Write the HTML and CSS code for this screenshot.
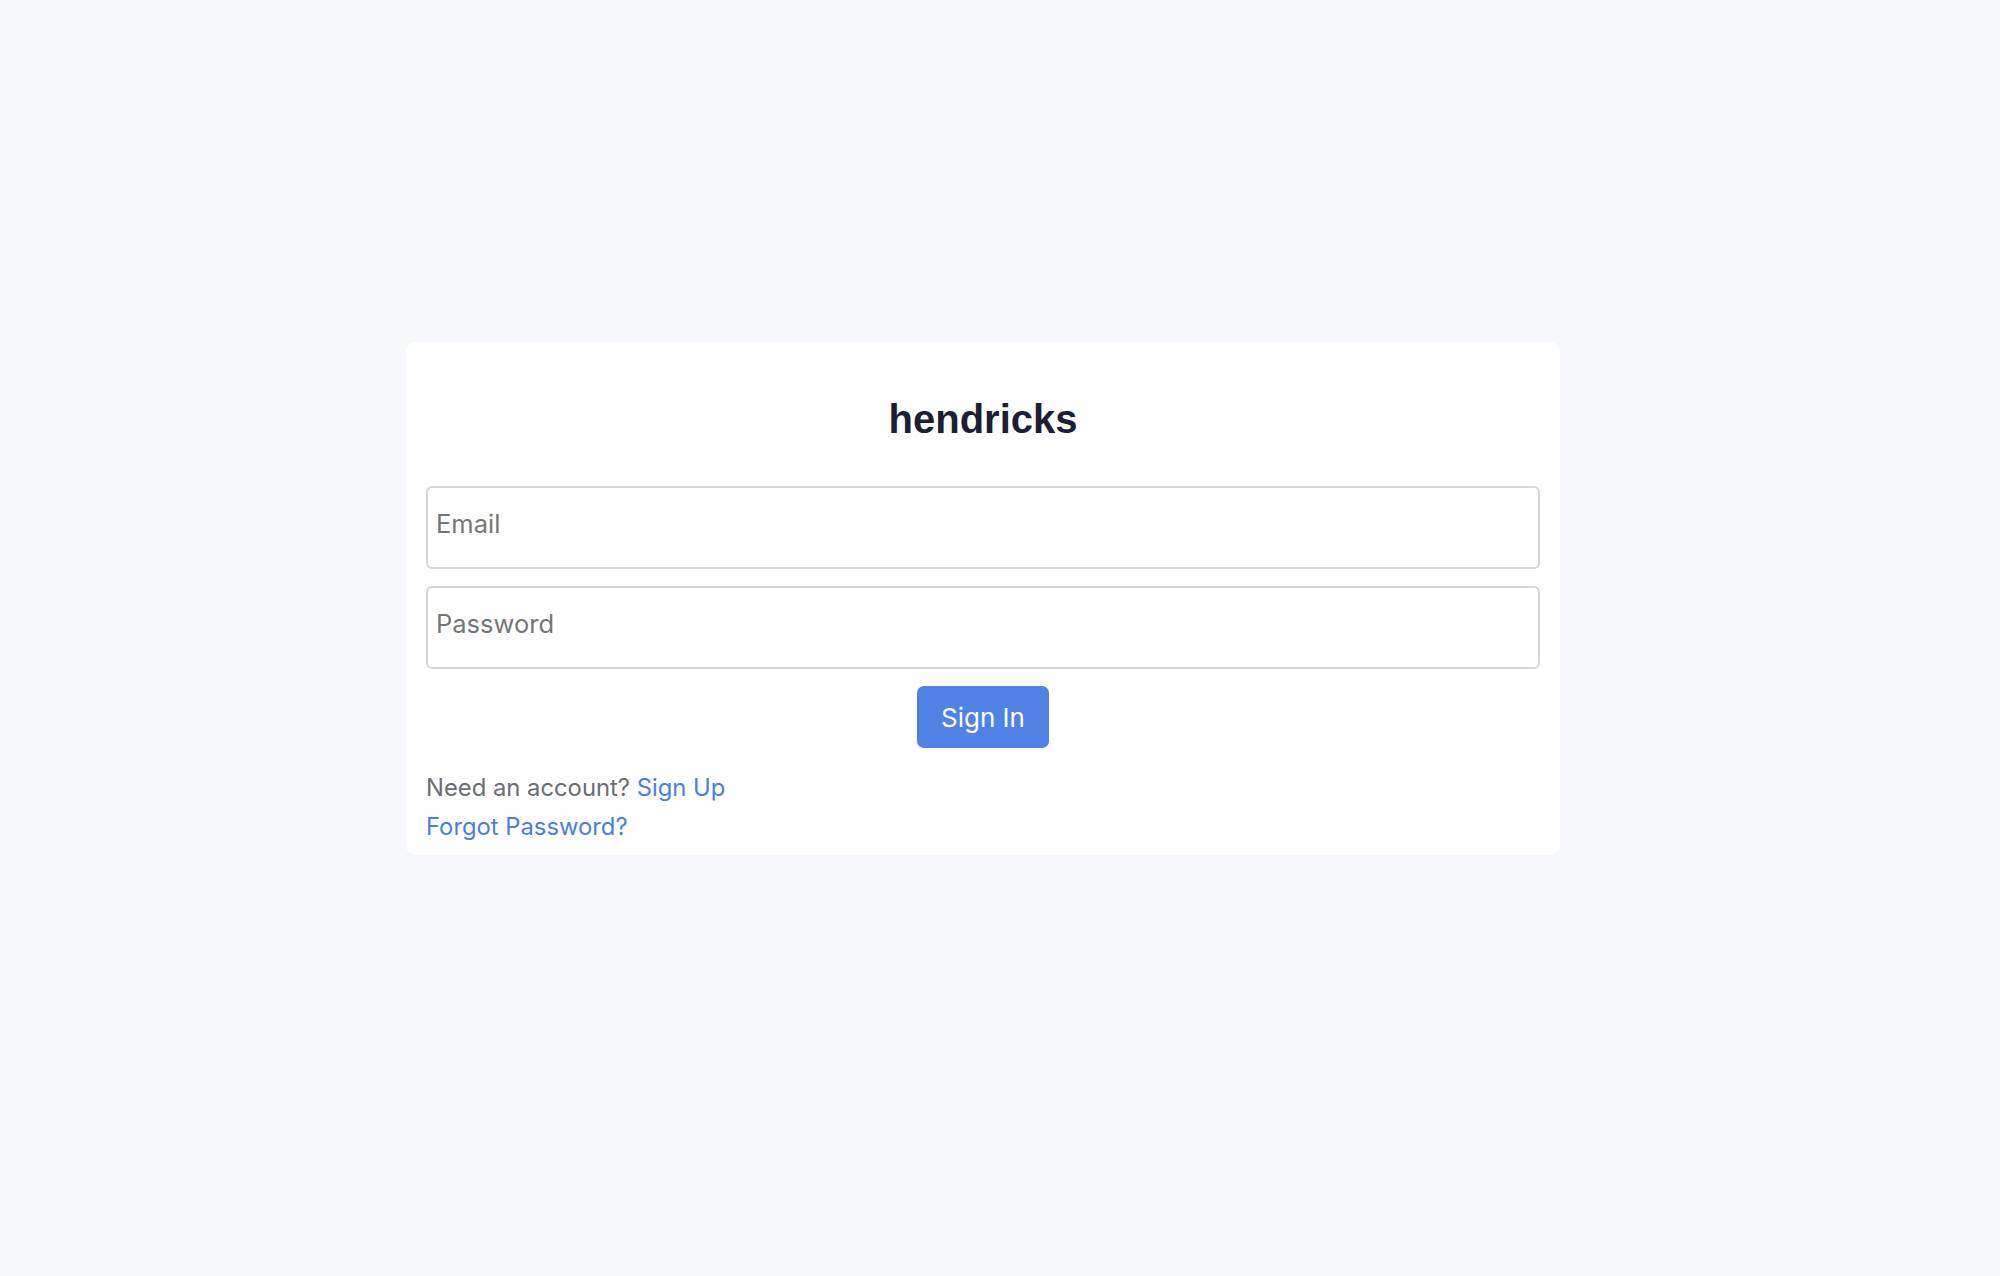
FILE: index.html
```html
<!DOCTYPE html>
<html lang="en">
<head>
<meta charset="utf-8">
<title>hendricks - Sign In</title>
<link rel="stylesheet" href="styles.css">
</head>
<body>
<main class="page">
  <section class="card">
    <h1 class="title">hendricks</h1>
    <form class="form" onsubmit="return false;">
      <input class="field" type="email" placeholder="Email">
      <input class="field" type="password" placeholder="Password">
      <div class="actions">
        <button class="btn" type="submit">Sign In</button>
      </div>
    </form>
    <div class="links">
      <p class="line">Need an account? <a class="link" href="#">Sign Up</a></p>
      <p class="line"><a class="link" href="#">Forgot Password?</a></p>
    </div>
  </section>
</main>
</body>
</html>
```

FILE: styles.css
```css
html, body {
  margin: 0;
  padding: 0;
  background: #f7f8fc;
}
body {
  width: 2000px;
  height: 1276px;
  font-family: Inter, "Noto Sans", sans-serif;
  color: #6b6e74;
}
.page {
  display: flex;
  justify-content: center;
  padding: 342px 34px 0 0;
}
.card {
  width: 1154px;
  box-sizing: border-box;
  background: #ffffff;
  border-radius: 10px;
  padding: 54px 20px 9px 20px;
}
.title {
  margin: 0 0 43px 0;
  text-align: center;
  font-family: "Liberation Sans", Arial, sans-serif;
  font-weight: 700;
  font-size: 40px;
  line-height: 47px;
  color: #1b1e35;
}
.form {
  display: flex;
  flex-direction: column;
  gap: 17px;
  margin: 0;
}
.field {
  display: block;
  width: 100%;
  height: 83px;
  box-sizing: border-box;
  border: 2px solid #d6d6d6;
  border-radius: 6px;
  padding: 0 0 8px 8px;
  font-family: Inter, "Noto Sans", sans-serif;
  font-size: 25.5px;
  color: #333;
  background: #fff;
  outline: none;
}
.field::placeholder {
  color: #767676;
  opacity: 1;
}
.actions {
  display: flex;
  justify-content: center;
}
.btn {
  height: 62px;
  padding: 0 24px;
  border: none;
  border-radius: 7px;
  background: #4f82e4;
  color: #ffffff;
  font-family: Inter, "Noto Sans", sans-serif;
  font-size: 26px;
  cursor: pointer;
}
.links {
  margin-top: 20px;
}
.line {
  margin: 0;
  font-size: 23.8px;
  line-height: 39px;
}
.link {
  color: #4a7fe1;
  text-decoration: none;
}
```
